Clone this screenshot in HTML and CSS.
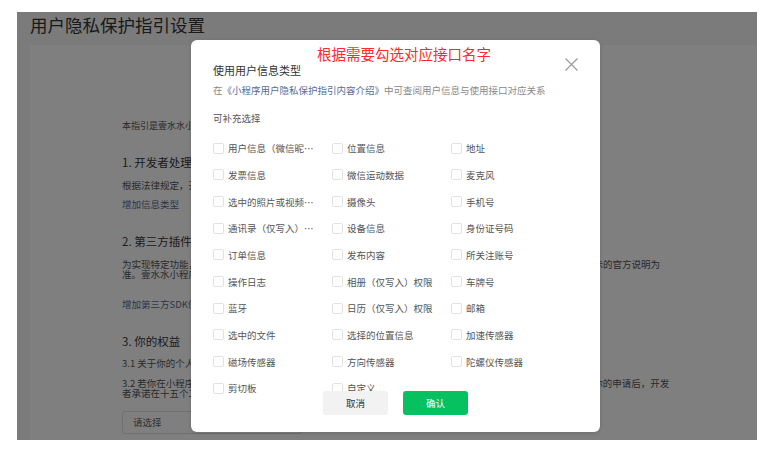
FILE: index.html
```html
<!DOCTYPE html>
<html lang="zh-CN">

<head>
    <meta charset="UTF-8">
    <meta name="viewport" content="width=device-width, initial-scale=1.0">
    <title>用户隐私保护指引设置</title>
    <link rel="stylesheet" href="styles.css">
</head>

<body>
    <div class="screen">
        <div class="page">
            <div class="page-header">
                <h1>用户隐私保护指引设置</h1>
            </div>
            <div class="page-card">
                <p class="intro">本指引是壹水水小程序开发者制定的用户隐私保护指引，用于说明开发者如何处理你的信息。</p>

                <h2>1. 开发者处理的信息</h2>
                <p class="para">根据法律规定，开发者仅处理实现小程序功能所必要的信息。</p>
                <a class="link">增加信息类型</a>

                <h2 class="gap">2. 第三方插件信息/SDK信息</h2>
                <p class="para">为实现特定功能，开发者可能会接入由第三方提供的插件/SDK。第三方插件/SDK的个人信息处理规则，请以其公示的官方说明为<br>准。壹水水小程序接入的第三方插件信息/SDK信息如下：</p>
                <a class="link link-sdk">增加第三方SDK信息</a>

                <h2 class="gap">3. 你的权益</h2>
                <p class="para para-31">3.1 关于你的个人信息，你可以通过以下方式与开发者联系，行使查阅、复制、更正、删除等法定权利。</p>
                <p class="para para-32">3.2 若你在小程序中注册了账号，你可以通过以下方式与开发者联系，申请注销你在小程序中使用的账号。在受理你的申请后，开发<br>者承诺在十五个工作日内完成核查和处理，并按照法律法规要求处理你的相关信息。</p>
                <div class="select">请选择</div>
            </div>
        </div>

        <div class="mask">
            <div class="dialog">
                <p class="note">根据需要勾选对应接口名字</p>
                <button class="close" aria-label="关闭">
                    <svg width="13" height="13" viewBox="0 0 13 13">
                        <path d="M0.5 0.5 L12.5 12.5 M12.5 0.5 L0.5 12.5" stroke="#9b9b9b" stroke-width="1.2" fill="none" />
                    </svg>
                </button>

                <div class="dialog-title">使用用户信息类型</div>
                <p class="dialog-desc">在<a>《小程序用户隐私保护指引内容介绍》</a>中可查阅用户信息与使用接口对应关系</p>
                <div class="dialog-sub">可补充选择</div>

                <div class="option-grid">
                    <label class="option"><span class="box"></span><span class="text">用户信息（微信昵称、头像）</span></label>
                    <label class="option"><span class="box"></span><span class="text">位置信息</span></label>
                    <label class="option"><span class="box"></span><span class="text">地址</span></label>

                    <label class="option"><span class="box"></span><span class="text">发票信息</span></label>
                    <label class="option"><span class="box"></span><span class="text">微信运动数据</span></label>
                    <label class="option"><span class="box"></span><span class="text">麦克风</span></label>

                    <label class="option"><span class="box"></span><span class="text">选中的照片或视频信息</span></label>
                    <label class="option"><span class="box"></span><span class="text">摄像头</span></label>
                    <label class="option"><span class="box"></span><span class="text">手机号</span></label>

                    <label class="option"><span class="box"></span><span class="text">通讯录（仅写入）权限</span></label>
                    <label class="option"><span class="box"></span><span class="text">设备信息</span></label>
                    <label class="option"><span class="box"></span><span class="text">身份证号码</span></label>

                    <label class="option"><span class="box"></span><span class="text">订单信息</span></label>
                    <label class="option"><span class="box"></span><span class="text">发布内容</span></label>
                    <label class="option"><span class="box"></span><span class="text">所关注账号</span></label>

                    <label class="option"><span class="box"></span><span class="text">操作日志</span></label>
                    <label class="option"><span class="box"></span><span class="text">相册（仅写入）权限</span></label>
                    <label class="option"><span class="box"></span><span class="text">车牌号</span></label>

                    <label class="option"><span class="box"></span><span class="text">蓝牙</span></label>
                    <label class="option"><span class="box"></span><span class="text">日历（仅写入）权限</span></label>
                    <label class="option"><span class="box"></span><span class="text">邮箱</span></label>

                    <label class="option"><span class="box"></span><span class="text">选中的文件</span></label>
                    <label class="option"><span class="box"></span><span class="text">选择的位置信息</span></label>
                    <label class="option"><span class="box"></span><span class="text">加速传感器</span></label>

                    <label class="option"><span class="box"></span><span class="text">磁场传感器</span></label>
                    <label class="option"><span class="box"></span><span class="text">方向传感器</span></label>
                    <label class="option"><span class="box"></span><span class="text">陀螺仪传感器</span></label>

                    <label class="option"><span class="box"></span><span class="text">剪切板</span></label>
                    <label class="option"><span class="box"></span><span class="text">自定义</span></label>
                </div>

                <div class="dialog-footer">
                    <button class="btn btn-cancel">取消</button>
                    <button class="btn btn-ok">确认</button>
                </div>
            </div>
        </div>
    </div>
</body>

</html>
```

FILE: styles.css
```css
* {
    box-sizing: border-box;
}

body {
    margin: 0;
    padding: 12px 9px 12px 17px;
    background: #fff;
    font-family: "Noto Sans CJK SC", "Noto Sans", sans-serif;
}

.screen {
    position: relative;
    width: 740px;
    height: 428px;
    overflow: hidden;
}

/* page under the mask */
.page {
    height: 100%;
    display: flex;
    flex-direction: column;
    background: #f5f6f5;
    padding-left: 13px;
}

.page-header {
    height: 33px;
    flex-shrink: 0;
    padding-top: 1px;
}

.page-header h1 {
    margin: 0;
    font-size: 17.5px;
    line-height: 24px;
    font-weight: normal;
    color: #353535;
}

.page-card {
    flex: 1;
    background: #fff;
    padding: 75px 0 0 92px;
    color: #555;
}

.page-card p {
    margin: 0;
    white-space: nowrap;
}

.intro {
    font-size: 9px;
    line-height: 12px;
}

.page-card h2 {
    margin: 22px 0 0;
    font-size: 11.5px;
    line-height: 16px;
    font-weight: normal;
    color: #383838;
}

.page-card h2.gap {
    margin-top: 23px;
}

.para {
    font-size: 9.5px;
    line-height: 10px;
    margin-top: 10px !important;
}

.link {
    display: block;
    margin-top: 8px;
    font-size: 9.5px;
    line-height: 12px;
    color: #576b95;
}

.link-sdk {
    margin-top: 19px;
}

.para-31 {
    line-height: 12px;
    margin-top: 8px !important;
}

.para-32 {
    margin-top: 9px !important;
}

.select {
    width: 180px;
    height: 23px;
    margin-top: 13px;
    border: 1px solid #e0e0e0;
    border-radius: 3px;
    padding-left: 10px;
    font-size: 9.5px;
    line-height: 21px;
    color: #666;
}

/* dialog */
.mask {
    position: absolute;
    inset: 0;
    background: rgba(0, 0, 0, 0.5);
    padding: 28px 0 0 174px;
}

.dialog {
    position: relative;
    width: 409px;
    height: 392px;
    background: #fff;
    border-radius: 6px;
    box-shadow: 0 1px 4px rgba(0, 0, 0, 0.15);
    padding: 5px 22px 0;
}

.note {
    margin: 0 0 0 104px;
    font-size: 14.5px;
    line-height: 18px;
    color: #fa2a2a;
}

.close {
    position: absolute;
    top: 18px;
    right: 22px;
    width: 13px;
    height: 13px;
    padding: 0;
    border: none;
    background: none;
    cursor: pointer;
}

.close svg {
    display: block;
}

.dialog-title {
    font-size: 11px;
    line-height: 14px;
    color: #333;
}

.dialog-desc {
    margin: 6px 0 0;
    font-size: 9.5px;
    line-height: 14px;
    color: #888;
    white-space: nowrap;
}

.dialog-desc a {
    color: #576b95;
}

.dialog-sub {
    margin-top: 14px;
    font-size: 9.5px;
    line-height: 14px;
    color: #555;
}

.option-grid {
    margin-top: 10px;
    display: grid;
    grid-template-columns: repeat(3, 119px);
    grid-auto-rows: 26.67px;
}

.option {
    display: flex;
    align-items: center;
    gap: 4px;
    font-size: 9.5px;
    color: #555;
}

.box {
    width: 11px;
    height: 11px;
    flex-shrink: 0;
    border: 1px solid #e2e2e2;
    border-radius: 2px;
}

.text {
    max-width: 90px;
    white-space: nowrap;
    overflow: hidden;
    text-overflow: ellipsis;
}

.dialog-footer {
    position: absolute;
    left: 0;
    right: 0;
    bottom: 17px;
    display: flex;
    justify-content: center;
    gap: 15px;
}

.btn {
    width: 65px;
    height: 24px;
    border: none;
    border-radius: 3px;
    font-family: "Noto Sans CJK SC", "Noto Sans", sans-serif;
    font-size: 9.5px;
    cursor: pointer;
}

.btn-cancel {
    background: #f2f2f2;
    color: #333;
}

.btn-ok {
    background: #07c160;
    color: #fff;
}
```
